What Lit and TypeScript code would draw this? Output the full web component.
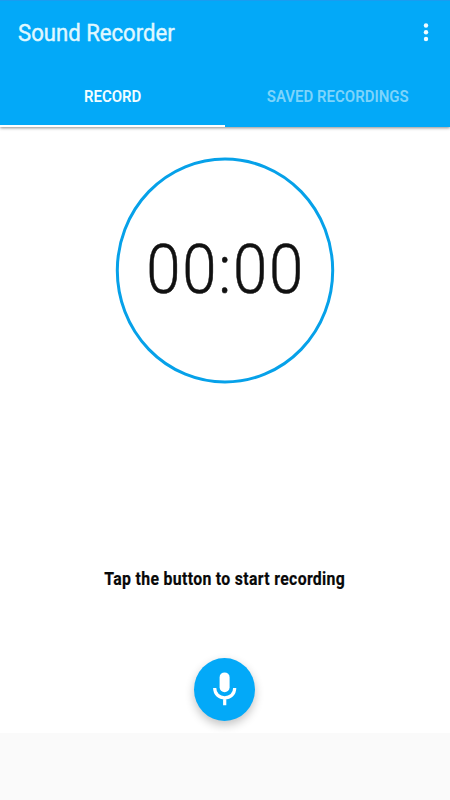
import { LitElement, html, css } from "lit";
import { customElement, state } from "lit/decorators.js";

@customElement("app-root")
export class AppRoot extends LitElement {
  @state() private time = "00:00";

  static styles = css`
    :host { display: flex; flex-direction: column; height: 800px; width: 450px; overflow: hidden; background: #fff; font-family: Roboto, sans-serif; }
    .header { box-sizing: border-box; flex: none; height: 127px; background: #03a9f8; border-top: 1px solid #1a9cf0; color: #fff; box-shadow: 0 1px 3px rgba(0,0,0,.45); display: flex; flex-direction: column; }
    .bar { height: 65px; display: flex; align-items: center; justify-content: space-between; padding: 0 20px 0 17.5px; }
    .title { font-size: 23px; font-weight: 400; line-height: 28px; white-space: nowrap; color: #e0f8ff; transform: scaleX(.962); transform-origin: left; -webkit-text-stroke: .4px #e0f8ff; }
    .more { display: block; width: 8px; height: 20px; margin-bottom: 2px; }
    .tabs { flex: 1; display: grid; grid-template-columns: 1fr 1fr; }
    .tab { display: flex; align-items: center; justify-content: center; font-size: 16px; font-weight: 600; border-bottom: 2px solid transparent; color: #7dd4fb; white-space: nowrap; }
    .tab span { transform: scaleX(.937); margin-top: 1px; }
    .active { color: #f2fdff; border-color: #fff; }
    .main { flex: none; height: 606px; display: flex; flex-direction: column; align-items: center; }
    .dial { width: 220px; height: 228px; margin-top: 29px; display: grid; place-items: center; }
    .dial > * { grid-area: 1 / 1; }
    .ring { display: block; width: 220px; height: 228px; }
    .time { font-size: 69px; font-weight: 300; line-height: 82px; padding-left: 2px; letter-spacing: 2px; color: #111; white-space: nowrap; transform: scaleX(.895); -webkit-text-stroke: .5px #111; }
    .hint { margin-top: 183px; font-size: 19px; line-height: 24px; font-weight: 700; letter-spacing: .4px; color: #080808; white-space: nowrap; transform: scaleX(.832); -webkit-text-stroke: .2px #080808; }
    .mic { margin: 67px 1px 0 0; padding: 0; border: 0; width: 61px; height: 63px; border-radius: 50%; background: #03a9f8; box-shadow: 0 4px 10px rgba(0,0,0,.24); }
    .mic svg { display: block; }
    .footer { flex: 1; background: #fafafa; }
  `;

  render() {
    return html`
      <div class="header">
        <div class="bar">
          <span class="title">Sound Recorder</span>
          <svg class="more" viewBox="0 0 8 20" fill="#f0fcff"><circle cx="4" cy="2.500" r="2.200"/><circle cx="4" cy="9.300" r="2.200"/><circle cx="4" cy="16" r="2.200"/></svg>
        </div>
        <div class="tabs"><div class="tab active"><span>RECORD</span></div><div class="tab"><span>SAVED RECORDINGS</span></div></div>
      </div>
      <div class="main">
        <div class="dial">
          <svg class="ring" viewBox="0 0 220 228"><ellipse cx="110" cy="114.500" rx="107.700" ry="111.500" fill="none" stroke="#06a1e9" stroke-width="3"/></svg>
          <span class="time">${this.time}</span>
        </div>
        <div class="hint">Tap the button to start recording</div>
        <button class="mic" aria-label="Record"><svg width="61" height="63" viewBox="0 0 61 63"><rect x="25.600" y="14.400" width="10" height="19.800" rx="5" fill="#fff"/><path d="M20.700 30C20.700 36.300 25.300 39.800 30.700 39.800S40.700 36.300 40.700 30M30.700 39.800V47.200" fill="none" stroke="#fff" stroke-width="3.200"/></svg></button>
      </div>
      <div class="footer"></div>`;
  }
}
